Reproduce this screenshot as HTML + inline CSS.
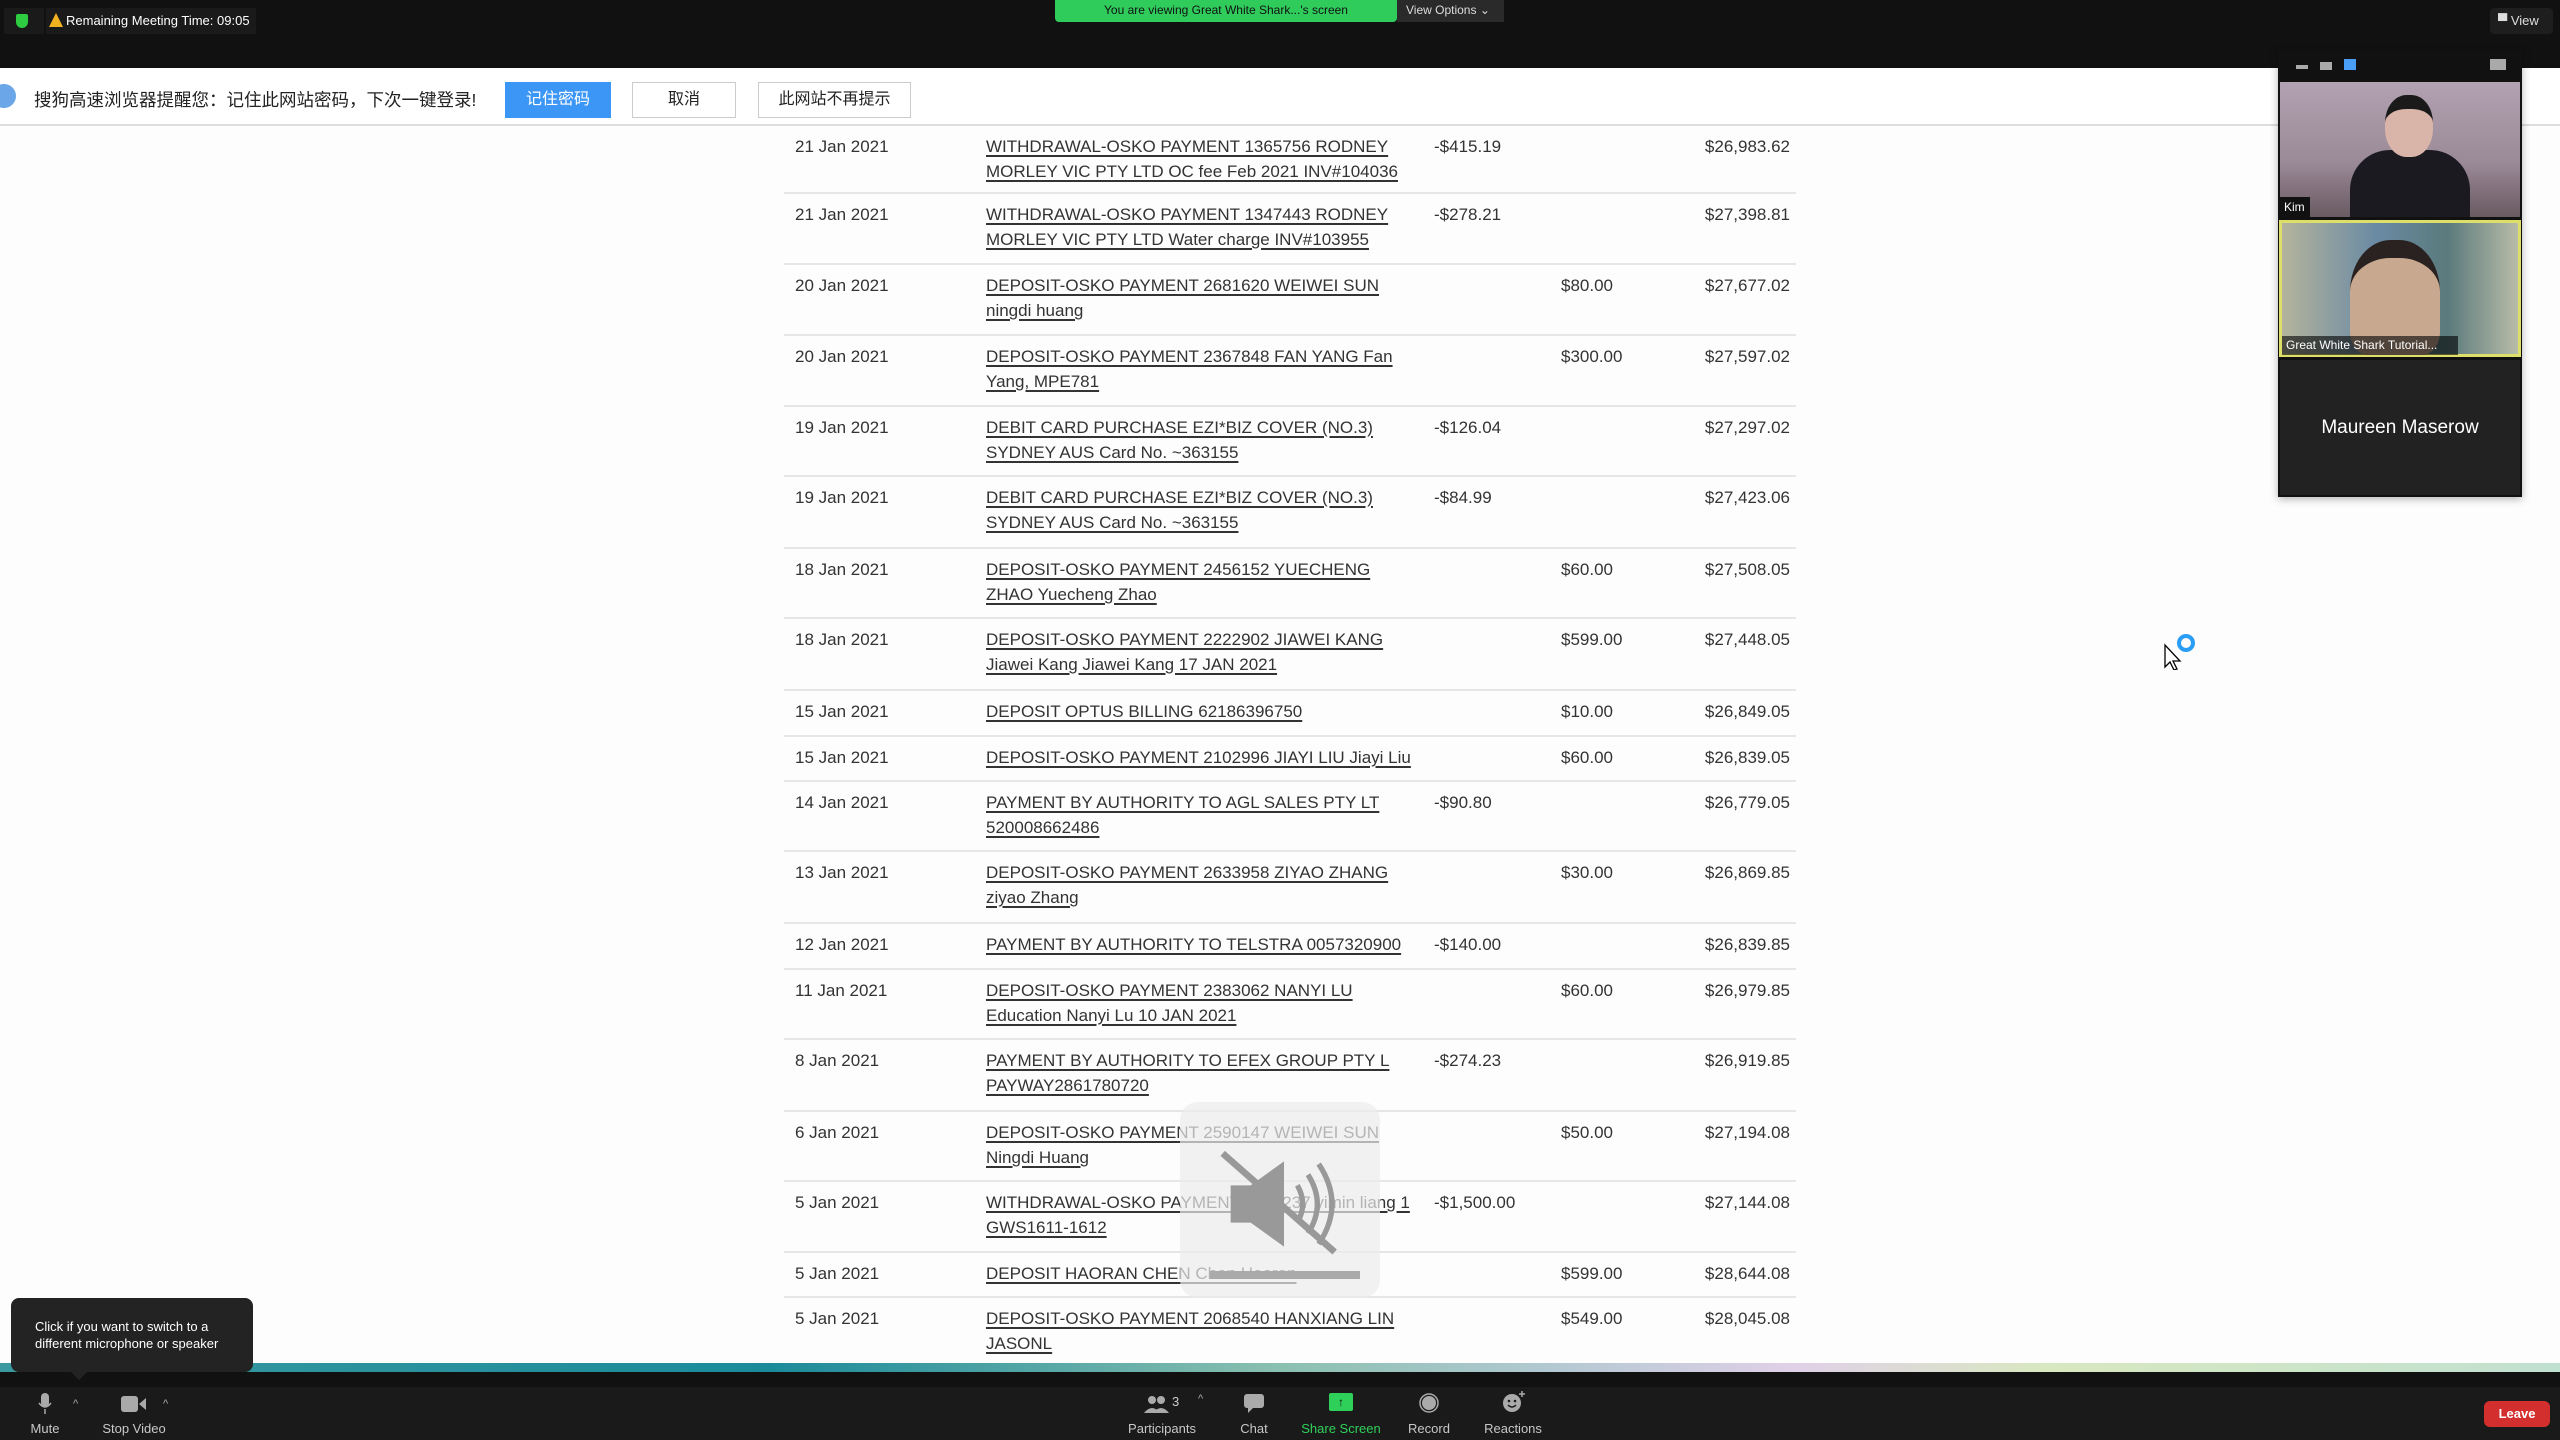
<!DOCTYPE html>
<html><head><meta charset="utf-8"><style>
*{margin:0;padding:0;box-sizing:border-box}
body{width:2560px;height:1440px;overflow:hidden;background:#fdfdfd;font-family:"Liberation Sans","Noto Sans CJK SC",sans-serif;position:relative}
.a{position:absolute}
.row{position:absolute;left:784px;width:1012px;border-bottom:2px solid #e6e6e6;font-size:17px;color:#333;line-height:25px}
.row span{position:absolute;top:8px}
.d{left:11px}.t{left:202px;text-decoration:underline;text-decoration-thickness:2px;text-underline-offset:3px;width:425px}
.db{left:650px}.cr{left:777px}.bl{right:6px;text-align:right}
.tb{position:absolute;top:1393px;text-align:center;color:#c8c8c8;font-size:13px}
.tb .l{position:absolute;top:28px;left:50%;transform:translateX(-50%);white-space:nowrap}
</style></head><body>
<div class="a" style="left:0;top:0;width:2560px;height:68px;background:#111"></div>
<div class="a" style="left:4px;top:8px;width:40px;height:26px;background:#1a1a1a"></div>
<div class="a" style="left:16px;top:14px;width:12px;height:14px;background:#2ecc40;border-radius:2px 2px 6px 6px"></div>
<div class="a" style="left:46px;top:8px;width:210px;height:26px;background:#1a1a1a"></div>
<div class="a" style="left:49px;top:13px;width:0;height:0;border-left:7px solid transparent;border-right:7px solid transparent;border-bottom:14px solid #f2b320"></div>
<div class="a" style="left:66px;top:13px;color:#fff;font-size:13px">Remaining Meeting Time: 09:05</div>
<div class="a" style="left:1055px;top:0;width:342px;height:22px;background:#2fcc5c;border-radius:0 0 4px 4px;color:#111;font-size:12px;text-align:center;line-height:20px">You are viewing Great White Shark...'s screen</div>
<div class="a" style="left:1397px;top:0;width:107px;height:22px;background:#2a2a2a;color:#ddd;font-size:12px;line-height:20px;padding-left:9px">View Options ⌄</div>
<div class="a" style="left:2490px;top:8px;width:63px;height:26px;background:#1e1e1e;border-radius:4px;color:#ddd;font-size:13px;line-height:26px;padding-left:8px">▀ View</div>
<div class="a" style="left:0;top:68px;width:2560px;height:58px;background:#fff;border-bottom:2px solid #ddd"></div>
<div class="a" style="left:-8px;top:84px;width:24px;height:24px;border-radius:50%;background:#6aa6e8"></div>
<div class="a" style="left:34px;top:87px;font-size:17.5px;color:#222">搜狗高速浏览器提醒您：记住此网站密码，下次一键登录!</div>
<div class="a" style="left:505px;top:82px;width:106px;height:36px;background:#3c96f5;color:#fff;font-size:16px;text-align:center;line-height:36px">记住密码</div>
<div class="a" style="left:632px;top:82px;width:104px;height:36px;border:1px solid #ccc;background:#fff;color:#222;font-size:16px;text-align:center;line-height:34px">取消</div>
<div class="a" style="left:758px;top:82px;width:153px;height:36px;border:1px solid #ccc;background:#fff;color:#222;font-size:16px;text-align:center;line-height:34px">此网站不再提示</div>
<div class="row" style="top:126px;height:68px"><span class="d">21 Jan 2021</span><span class="t">WITHDRAWAL-OSKO PAYMENT 1365756 RODNEY MORLEY VIC PTY LTD OC fee Feb 2021 INV#104036</span><span class="db">-$415.19</span><span class="bl">$26,983.62</span></div>
<div class="row" style="top:194px;height:71px"><span class="d">21 Jan 2021</span><span class="t">WITHDRAWAL-OSKO PAYMENT 1347443 RODNEY MORLEY VIC PTY LTD Water charge INV#103955</span><span class="db">-$278.21</span><span class="bl">$27,398.81</span></div>
<div class="row" style="top:265px;height:71px"><span class="d">20 Jan 2021</span><span class="t">DEPOSIT-OSKO PAYMENT 2681620 WEIWEI SUN ningdi huang</span><span class="cr">$80.00</span><span class="bl">$27,677.02</span></div>
<div class="row" style="top:336px;height:71px"><span class="d">20 Jan 2021</span><span class="t">DEPOSIT-OSKO PAYMENT 2367848 FAN YANG Fan Yang, MPE781</span><span class="cr">$300.00</span><span class="bl">$27,597.02</span></div>
<div class="row" style="top:407px;height:70px"><span class="d">19 Jan 2021</span><span class="t">DEBIT CARD PURCHASE EZI*BIZ COVER (NO.3) SYDNEY AUS Card No. ~363155</span><span class="db">-$126.04</span><span class="bl">$27,297.02</span></div>
<div class="row" style="top:477px;height:72px"><span class="d">19 Jan 2021</span><span class="t">DEBIT CARD PURCHASE EZI*BIZ COVER (NO.3) SYDNEY AUS Card No. ~363155</span><span class="db">-$84.99</span><span class="bl">$27,423.06</span></div>
<div class="row" style="top:549px;height:70px"><span class="d">18 Jan 2021</span><span class="t">DEPOSIT-OSKO PAYMENT 2456152 YUECHENG ZHAO Yuecheng Zhao</span><span class="cr">$60.00</span><span class="bl">$27,508.05</span></div>
<div class="row" style="top:619px;height:72px"><span class="d">18 Jan 2021</span><span class="t">DEPOSIT-OSKO PAYMENT 2222902 JIAWEI KANG Jiawei Kang Jiawei Kang 17 JAN 2021</span><span class="cr">$599.00</span><span class="bl">$27,448.05</span></div>
<div class="row" style="top:691px;height:46px"><span class="d">15 Jan 2021</span><span class="t">DEPOSIT OPTUS BILLING 62186396750</span><span class="cr">$10.00</span><span class="bl">$26,849.05</span></div>
<div class="row" style="top:737px;height:45px"><span class="d">15 Jan 2021</span><span class="t" style="width:460px">DEPOSIT-OSKO PAYMENT 2102996 JIAYI LIU Jiayi Liu</span><span class="cr">$60.00</span><span class="bl">$26,839.05</span></div>
<div class="row" style="top:782px;height:70px"><span class="d">14 Jan 2021</span><span class="t">PAYMENT BY AUTHORITY TO AGL SALES PTY LT 520008662486</span><span class="db">-$90.80</span><span class="bl">$26,779.05</span></div>
<div class="row" style="top:852px;height:72px"><span class="d">13 Jan 2021</span><span class="t">DEPOSIT-OSKO PAYMENT 2633958 ZIYAO ZHANG ziyao Zhang</span><span class="cr">$30.00</span><span class="bl">$26,869.85</span></div>
<div class="row" style="top:924px;height:46px"><span class="d">12 Jan 2021</span><span class="t">PAYMENT BY AUTHORITY TO TELSTRA 0057320900</span><span class="db">-$140.00</span><span class="bl">$26,839.85</span></div>
<div class="row" style="top:970px;height:70px"><span class="d">11 Jan 2021</span><span class="t">DEPOSIT-OSKO PAYMENT 2383062 NANYI LU Education Nanyi Lu 10 JAN 2021</span><span class="cr">$60.00</span><span class="bl">$26,979.85</span></div>
<div class="row" style="top:1040px;height:72px"><span class="d">8 Jan 2021</span><span class="t">PAYMENT BY AUTHORITY TO EFEX GROUP PTY L PAYWAY2861780720</span><span class="db">-$274.23</span><span class="bl">$26,919.85</span></div>
<div class="row" style="top:1112px;height:70px"><span class="d">6 Jan 2021</span><span class="t">DEPOSIT-OSKO PAYMENT 2590147 WEIWEI SUN Ningdi Huang</span><span class="cr">$50.00</span><span class="bl">$27,194.08</span></div>
<div class="row" style="top:1182px;height:71px"><span class="d">5 Jan 2021</span><span class="t">WITHDRAWAL-OSKO PAYMENT 1293237 yimin liang 1 GWS1611-1612</span><span class="db">-$1,500.00</span><span class="bl">$27,144.08</span></div>
<div class="row" style="top:1253px;height:45px"><span class="d">5 Jan 2021</span><span class="t">DEPOSIT HAORAN CHEN Chen Haoran</span><span class="cr">$599.00</span><span class="bl">$28,644.08</span></div>
<div class="row" style="top:1298px;height:80px;border:none"><span class="d">5 Jan 2021</span><span class="t">DEPOSIT-OSKO PAYMENT 2068540 HANXIANG LIN JASONL</span><span class="cr">$549.00</span><span class="bl">$28,045.08</span></div>
<div class="a" style="left:1180px;top:1102px;width:200px;height:196px;background:rgba(235,235,235,0.7);border-radius:18px"></div>
<svg class="a" style="left:1220px;top:1145px" width="120" height="110" viewBox="0 0 90 82"><path d="M8 30h15l25-18v64L23 58H8z" fill="#999"/><path d="M58 30q8 14 0 28M66 22q14 22 0 44M74 14q20 30 0 60" stroke="#999" stroke-width="4" fill="none"/><path d="M2 6L86 80" stroke="#999" stroke-width="5"/></svg>
<div class="a" style="left:1210px;top:1271px;width:150px;height:8px;background:#aaa"></div>
<svg class="a" style="left:2160px;top:630px" width="40" height="40"><path d="M5 15v22l5-5 4 8 3-1-4-8h7z" fill="#fff" stroke="#000" stroke-width="1.3"/><circle cx="26" cy="13" r="7" fill="none" stroke="#2a9df4" stroke-width="4"/></svg>
<div class="a" style="left:2278px;top:50px;width:244px;height:447px;background:#111;box-shadow:0 2px 8px rgba(0,0,0,.3)"></div>
<div class="a" style="left:2296px;top:65px;width:12px;height:4px;background:#aaa"></div>
<div class="a" style="left:2320px;top:62px;width:12px;height:8px;background:#aaa"></div>
<div class="a" style="left:2344px;top:59px;width:12px;height:11px;background:#4a9ef5"></div>
<div class="a" style="left:2490px;top:59px;width:16px;height:11px;background:#aaa"></div>
<div class="a" style="left:2280px;top:82px;width:240px;height:135px;background:linear-gradient(#b2a2b2,#9a8996 60%,#6a5a62)"></div>
<div class="a" style="left:2350px;top:150px;width:120px;height:67px;background:#1b1a20;border-radius:40px 40px 0 0"></div>
<div class="a" style="left:2385px;top:95px;width:48px;height:62px;background:#d9b4a8;border-radius:45%;border-top:14px solid #1a1a1a"></div>
<div class="a" style="left:2280px;top:197px;width:30px;height:20px;background:#111;color:#fff;font-size:12px;padding:3px 4px">Kim</div>
<div class="a" style="left:2279px;top:220px;width:242px;height:137px;border:3px solid #dede6a;background:linear-gradient(90deg,#b4b49c,#6a8aa4 40%,#5a7a7c 70%,#b8bca8)"></div>
<div class="a" style="left:2350px;top:240px;width:90px;height:115px;background:#c9a890;border-radius:45% 45% 20% 20%;border-top:18px solid #2a2220"></div>
<div class="a" style="left:2282px;top:336px;width:176px;height:19px;background:rgba(0,0,0,.6);color:#fff;font-size:12px;padding:2px 4px">Great White Shark Tutorial...</div>
<div class="a" style="left:2280px;top:360px;width:240px;height:135px;background:#222;color:#fff;font-size:19px;text-align:center;line-height:135px">Maureen Maserow</div>
<div class="a" style="left:0;top:1363px;width:2560px;height:9px;background:linear-gradient(90deg,#3a9aa0,#1a8a9a 30%,#8ac0b0 50%,#b0c8d0 60%,#e0d0e8 70%,#d8e8c0 80%,#c0e0d0)"></div>
<div class="a" style="left:0;top:1372px;width:2560px;height:15px;background:#111"></div>
<div class="a" style="left:0;top:1387px;width:2560px;height:53px;background:#1a1a1a"></div>
<div class="a" style="left:11px;top:1298px;width:242px;height:74px;background:#232323;border-radius:8px"></div>
<div class="a" style="left:71px;top:1372px;width:0;height:0;border-left:8px solid transparent;border-right:8px solid transparent;border-top:8px solid #232323"></div>
<div class="a" style="left:35px;top:1318px;color:#fff;font-size:13px;line-height:17px">Click if you want to switch to a<br>different microphone or speaker</div>
<div class="tb" style="left:45px"><svg width="14" height="22" style="position:absolute;left:-7px"><rect x="3" y="0" width="8" height="14" rx="4" fill="#aaa"/><path d="M1 10q6 8 12 0M7 16v5" stroke="#aaa" stroke-width="1.5" fill="none"/></svg><span class="l">Mute</span></div>
<div class="a" style="left:73px;top:1398px;color:#aaa;font-size:11px">^</div>
<div class="tb" style="left:134px"><svg width="26" height="16" style="position:absolute;left:-13px;top:3px"><rect x="0" y="0" width="17" height="16" rx="3" fill="#aaa"/><path d="M18 8l7-6v12z" fill="#aaa"/></svg><span class="l">Stop Video</span></div>
<div class="a" style="left:163px;top:1398px;color:#aaa;font-size:11px">^</div>
<div class="tb" style="left:1162px"><svg width="26" height="18" style="position:absolute;left:-18px;top:2px"><circle cx="8" cy="5" r="4" fill="#aaa"/><circle cx="17" cy="5" r="4" fill="#aaa"/><path d="M0 18q8-10 16 0zM9 18q8-10 16 0z" fill="#aaa"/></svg><span style="position:absolute;left:10px;top:1px;color:#ccc">3</span><span style="position:absolute;left:36px;top:0;color:#aaa;font-size:11px">^</span><span class="l">Participants</span></div>
<div class="tb" style="left:1254px"><svg width="20" height="20" style="position:absolute;left:-10px;top:1px"><rect x="0" y="0" width="20" height="14" rx="3" fill="#aaa"/><path d="M4 13v6l6-6z" fill="#aaa"/></svg><span class="l">Chat</span></div>
<div class="tb" style="left:1341px;color:#2fd05a"><div style="position:absolute;left:-12px;top:0;width:24px;height:18px;background:#2fd05a;border-radius:2px;color:#111;font-size:12px;line-height:18px">↑</div><span class="l" style="color:#2fd05a">Share Screen</span></div>
<div class="tb" style="left:1429px"><svg width="20" height="20" style="position:absolute;left:-10px;top:0"><circle cx="10" cy="10" r="9" fill="none" stroke="#aaa" stroke-width="1.5"/><circle cx="10" cy="10" r="7" fill="#aaa"/></svg><span class="l">Record</span></div>
<div class="tb" style="left:1513px"><svg width="24" height="22" style="position:absolute;left:-11px;top:-2px"><circle cx="10" cy="12" r="9" fill="#aaa"/><circle cx="7" cy="10" r="1.3" fill="#1a1a1a"/><circle cx="13" cy="10" r="1.3" fill="#1a1a1a"/><path d="M6 14q4 4 8 0" stroke="#1a1a1a" stroke-width="1.4" fill="none"/><path d="M20 0v6M17 3h6" stroke="#aaa" stroke-width="1.5"/></svg><span class="l">Reactions</span></div>
<div class="a" style="left:2484px;top:1401px;width:66px;height:26px;background:#d42f2f;border-radius:6px;color:#fff;font-size:13px;font-weight:bold;text-align:center;line-height:26px">Leave</div>
</body></html>
